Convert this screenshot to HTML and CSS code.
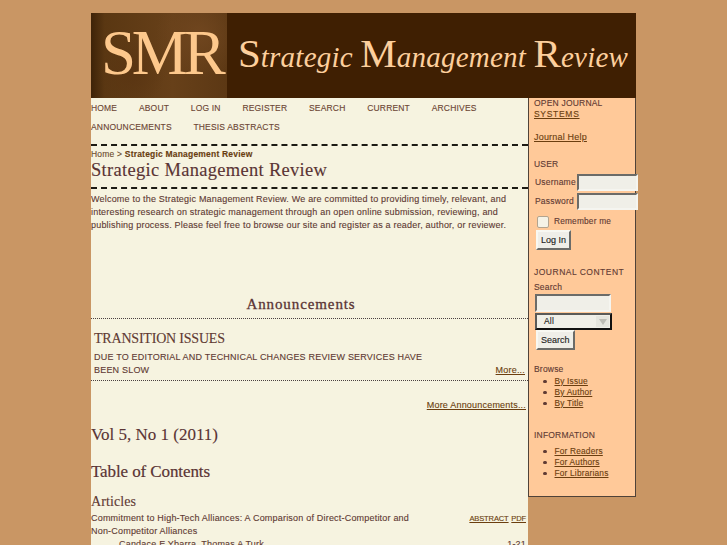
FILE: index.html
```html
<!DOCTYPE html>
<html lang="en">
<head>
<meta charset="utf-8">
<title>Strategic Management Review</title>
<link rel="stylesheet" href="styles.css">
</head>
<body>
<div class="container">
  <header class="header">
    <div class="logo">SMR</div>
    <div class="masthead"><span class="cap">S</span>trategic <span class="cap">M</span>anagement <span class="cap">R</span>eview</div>
  </header>
  <div class="columns">
    <main class="main">
      <nav class="nav">
        <a>HOME</a><a>ABOUT</a><a>LOG IN</a><a>REGISTER</a><a>SEARCH</a><a>CURRENT</a><a>ARCHIVES</a><a>ANNOUNCEMENTS</a><a>THESIS ABSTRACTS</a>
      </nav>
      <div class="crumbs">Home &gt; <b>Strategic Management Review</b></div>
      <h1 class="title">Strategic Management Review</h1>
      <p class="intro">Welcome to the Strategic Management Review. We are committed to providing timely, relevant, and interesting research on strategic management through an open online submission, reviewing, and publishing process. Please feel free to browse our site and register as a reader, author, or reviewer.</p>
      <h2 class="ann-heading">Announcements</h2>
      <section class="ann">
        <h3 class="ann-title">TRANSITION ISSUES</h3>
        <div class="ann-row">
          <div class="ann-text">DUE TO EDITORIAL AND TECHNICAL CHANGES REVIEW SERVICES HAVE BEEN SLOW</div>
          <a class="link">More...</a>
        </div>
      </section>
      <div class="more"><a class="link">More Announcements...</a></div>
      <h2 class="vol">Vol 5, No 1 (2011)</h2>
      <h2 class="toc">Table of Contents</h2>
      <h3 class="sec">Articles</h3>
      <div class="article">
        <div class="article-title">Commitment to High-Tech Alliances: A Comparison of Direct-Competitor and Non-Competitor Alliances</div>
        <div class="article-links"><a class="link small">ABSTRACT</a> <a class="link small">PDF</a></div>
      </div>
      <div class="authors"><span>Candace E Ybarra, Thomas A Turk</span><span>1-21</span></div>
    </main>
    <aside class="side">
      <div class="block brand">OPEN JOURNAL<br><a class="link caps">SYSTEMS</a></div>
      <div class="block help"><a class="link">Journal Help</a></div>
      <div class="block user">
        <div class="label">USER</div>
        <div class="field"><span>Username</span><span class="input"></span></div>
        <div class="field"><span>Password</span><span class="input"></span></div>
        <div class="remember"><span class="check"></span><span>Remember me</span></div>
        <span class="btn">Log In</span>
      </div>
      <div class="block content">
        <div class="label wide">JOURNAL CONTENT</div>
        <div class="sub">Search</div>
        <span class="input search"></span>
        <div class="select"><span>All</span><span class="arrow"><svg width="8" height="6" viewBox="0 0 8 6"><path d="M0 0h8L4 6z" fill="#bdbdb6"/></svg></span></div>
        <span class="btn">Search</span>
        <div class="sub browse">Browse</div>
        <ul class="list">
          <li><a class="link">By Issue</a></li>
          <li><a class="link">By Author</a></li>
          <li><a class="link">By Title</a></li>
        </ul>
      </div>
      <div class="block info">
        <div class="label">INFORMATION</div>
        <ul class="list">
          <li><a class="link">For Readers</a></li>
          <li><a class="link">For Authors</a></li>
          <li><a class="link">For Librarians</a></li>
        </ul>
      </div>
    </aside>
  </div>
</div>
</body>
</html>
```
FILE: styles.css
```css
html, body { margin: 0; padding: 0; height: 545px; overflow: hidden; }
body { background: #c99664; color: #5f3a33; font: 9px/13px "Liberation Sans", Arial, sans-serif; letter-spacing: 0.2px; -webkit-text-stroke: 0.12px currentColor; }
.container { width: 545px; margin: 13px 0 0 91px; }
.header { display: flex; height: 85px; background: #3f1f02; -webkit-text-stroke: 0; }
.logo { flex: none; width: 136px; box-sizing: border-box; padding: 8px 0 0 10px; background: radial-gradient(circle at 30% 70%, #5a3512 0, transparent 30%), radial-gradient(circle at 80% 25%, #70461f 0, transparent 35%), linear-gradient(90deg, #3e2308 0, #5a3712 10%, #674019 60%, #5c3814 100%); color: #fdc88c; font: 63px/64px "Liberation Serif", serif; letter-spacing: -4.2px; }
.masthead { padding: 20px 0 0 11px; color: #fdcf9d; font: italic 29px/40px "Liberation Serif", serif; letter-spacing: 0.23px; white-space: nowrap; }
.cap { font-style: normal; font-size: 41px; letter-spacing: 0; }
.columns { display: flex; align-items: flex-start; }
.main { width: 437px; height: 460px; flex: none; overflow: hidden; background: #f6f3e0; }
.nav { display: flex; flex-wrap: wrap; align-content: flex-start; column-gap: 21.7px; height: 45px; padding-top: 1px; margin-bottom: -1px; border-bottom: 2px dashed #1c1a14; font-size: 8.5px; line-height: 19px; color: #6b4433; }
.nav a { white-space: nowrap; letter-spacing: 0.18px; }
.crumbs { margin-top: 4px; font-size: 8.5px; line-height: 11px; color: #6b4a2a; }
.crumbs b { color: #693d10; }
.title { margin: 0; height: 27px; border-bottom: 2px dashed #1c1a14; font: 400 18.5px/20px "Liberation Serif", serif; letter-spacing: 0.3px; color: #5a3434; }
.intro { margin: 4px 0 0; height: 100px; line-height: 13px; font-size: 9px; width: 432px; }
.ann-heading { margin: 0; height: 25px; padding-right: 17px; border-bottom: 1px dotted #4a4040; text-align: center; font: 400 15px/23px "Liberation Serif", serif; letter-spacing: 0.9px; color: #5a3434; -webkit-text-stroke: 0.3px currentColor; }
.ann { padding: 10px 3px 0 3px; height: 51px; border-bottom: 1px dotted #4a4040; }
.ann-title { margin: 0; font: 400 14px/20px "Liberation Serif", serif; color: #5f3a33; letter-spacing: -0.2px; }
.ann-row { display: flex; justify-content: space-between; align-items: flex-end; margin-top: 2px; }
.ann-text { width: 345px; }
.link { color: #6b3e0f; text-decoration: underline; }
.more { margin-top: 18px; padding-right: 2px; text-align: right; }
.vol { margin: 13px 0 0; font: 400 17px/20px "Liberation Serif", serif; color: #5a3434; letter-spacing: 0; }
.toc { margin: 17px 0 0; font: 400 17px/20px "Liberation Serif", serif; letter-spacing: -0.1px; -webkit-text-stroke: 0.2px #5a3434; color: #5a3434; }
.sec { margin: 10px 0 0; font: 400 14px/20px "Liberation Serif", serif; color: #5f3a33; letter-spacing: 0.1px; }
.article { display: flex; justify-content: space-between; }
.article-title { width: 335px; }
.article-links { padding-right: 2px; white-space: nowrap; }
.small { font-size: 7.5px; letter-spacing: -0.1px; }
.authors { display: flex; justify-content: space-between; padding: 0 2px 0 28px; }
.side { width: 106px; height: 398px; flex: none; background: #ffc999; border: 1px solid #4f4238; border-top: 0; border-bottom-width: 1.5px; }
.block { padding-left: 5px; }
.brand { line-height: 11px; font-size: 8.5px; }
.caps { letter-spacing: 0.7px; }
.help { margin-top: 10px; line-height: 13px; padding-top: 1px; }
.user { margin-top: 14px; }
.label { font-size: 8.5px; }
.wide { letter-spacing: 0.5px; }
.field { display: flex; align-items: center; justify-content: space-between; width: 104px; height: 19px; padding-left: 1px; box-sizing: border-box; font-size: 8.5px; }
.label + .field { margin-top: 2px; }
.input { display: block; width: 61px; height: 17px; box-sizing: border-box; background: #f0efe8; border: 2px solid; border-color: #6b6b68 #f5f5f0 #f5f5f0 #6b6b68; }
.remember { display: flex; align-items: center; gap: 5px; margin: 4px 0 2px 3px; height: 13px; font-size: 8.3px; }
.check { width: 12px; height: 12px; box-sizing: border-box; background: #f5f2e6; border: 1px solid #b3a48f; border-radius: 2px; }
.btn { display: inline-block; box-sizing: border-box; margin-left: 2px; padding: 0 3px; height: 20px; line-height: 16px; color: #222; background: #efeee8; border: 2px solid; border-color: #f8f8f2 #6b6b68 #6b6b68 #f8f8f2; letter-spacing: 0; }
.content { margin-top: 16px; }
.sub { margin-top: 2px; font-size: 8.5px; }
.search { width: 76px; height: 18px; margin: 0 0 1px 1px; }
.select { display: flex; justify-content: space-between; align-items: center; box-sizing: border-box; width: 77px; height: 17px; margin: 0 0 0 1px; padding: 0 1px 0 7px; background: #f0efe8; border: 2px solid; border-color: #5a5a58 #111 #111 #5a5a58; color: #222; font-size: 8.5px; }
.arrow { display: flex; align-items: center; justify-content: center; width: 13px; height: 11px; background: #e5e5de; }
.browse { margin-top: 13px; }
.list { list-style: none; margin: 0; padding: 0 0 0 9px; line-height: 11px; font-size: 8.3px; }
.list li { display: flex; align-items: center; }
.list li::before { content: ""; width: 3.5px; height: 3.5px; margin-right: 8px; border-radius: 50%; background: #5f3a33; }
.info { margin-top: 20px; }
.info .list { margin-top: 4px; }
```
